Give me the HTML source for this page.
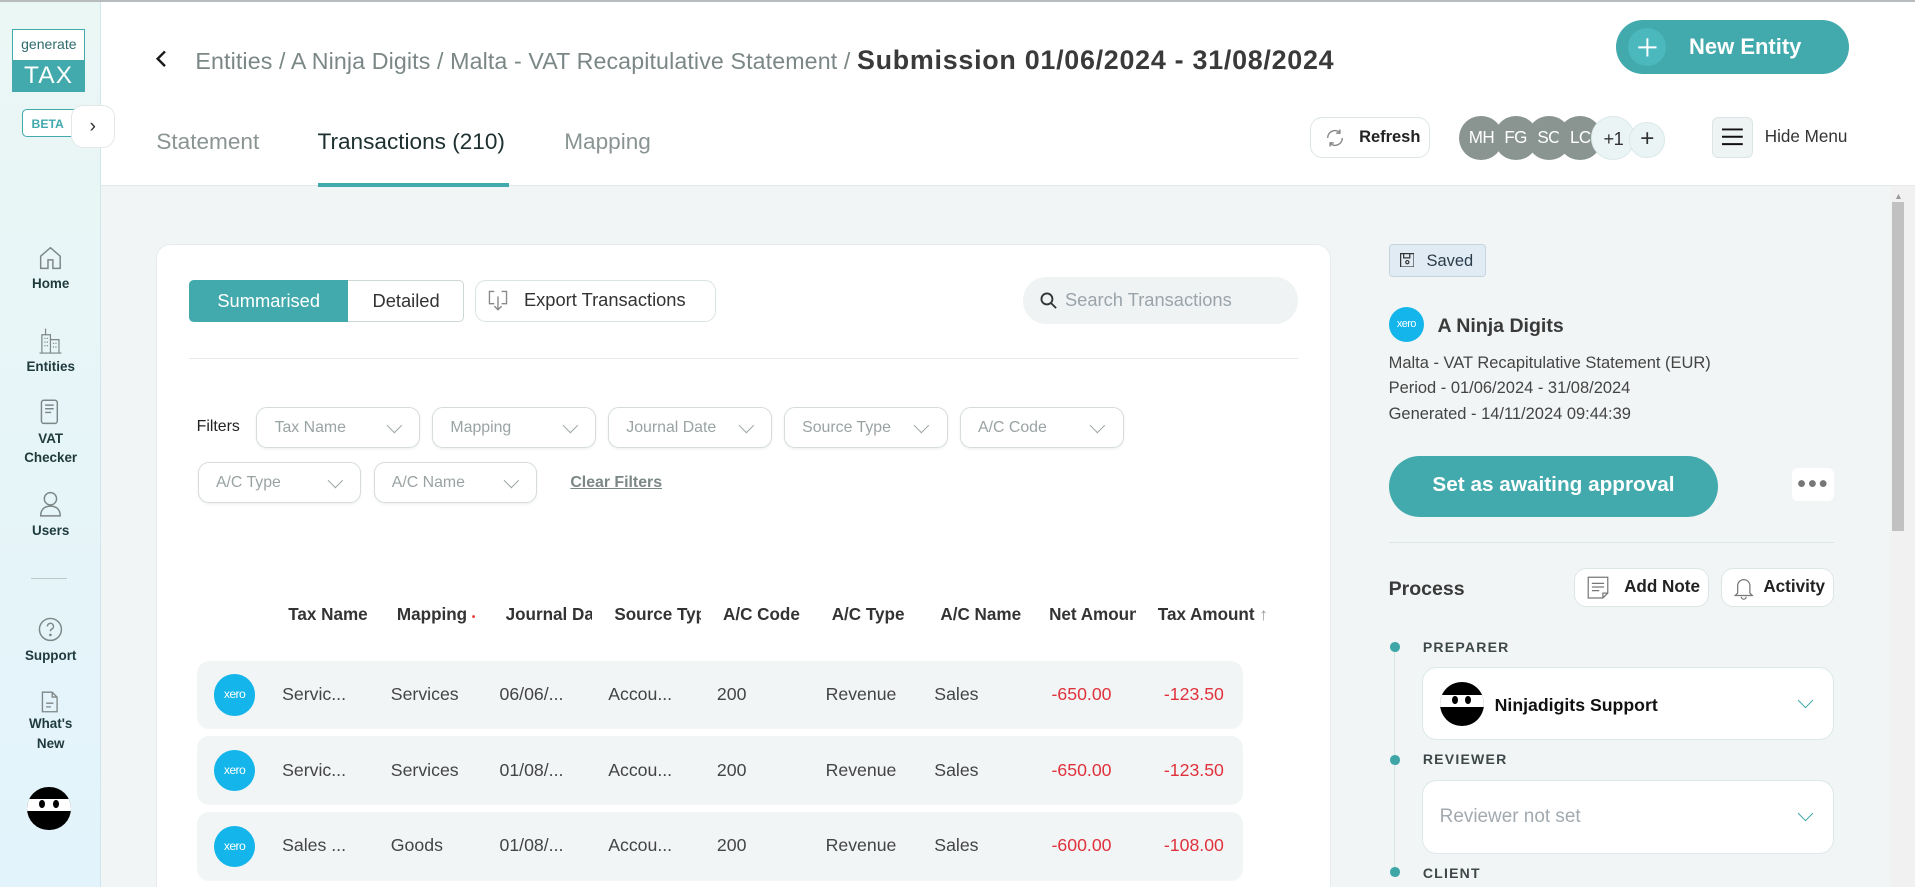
<!DOCTYPE html>
<html><head><meta charset="utf-8"><style>
*{box-sizing:border-box;margin:0;padding:0}
html,body{width:1915px;height:887px;overflow:hidden;background:#f2f5f5;font-family:"Liberation Sans",Arial,sans-serif}
#w{position:absolute;left:0;top:0;width:1568px;height:726px;zoom:1.22130;background:#f2f5f5;overflow:hidden}
.a{position:absolute}
.side{left:0;top:2px;width:83px;height:724px;background:linear-gradient(#ebf7f5,#e2f3fb);border-right:1px solid #cde7ea}
.nav{position:absolute;left:0;width:83px;text-align:center;font-size:11px;color:#1f3a3c;line-height:16px}
.hdr{left:83px;top:2px;width:1485px;height:150px;background:#fff;border-bottom:1px solid #e3e8e8}
.crumb{left:160px;top:37px;font-size:19px;color:#7b8786;white-space:nowrap;letter-spacing:.1px}
.crumb b{color:#3a3a3a;font-size:22px;font-weight:bold;letter-spacing:.6px}
.tab{top:106px;font-size:18.5px;color:#8a9493}
.card{left:128px;top:200px;width:962px;height:560px;background:#fff;border-radius:12px;border:1px solid #e6ecec}
.dd{position:absolute;height:34px;width:134px;border:1px solid #d6dcdc;border-radius:9px;background:#fff;font-size:13px;color:#9aa3a3;padding:9px 0 0 14px;box-shadow:0 1px 2px rgba(0,0,0,.06)}
.dd:after{content:"";position:absolute;right:16px;top:10px;width:8px;height:8px;border-right:1px solid #9aa3a3;border-bottom:1px solid #9aa3a3;transform:rotate(45deg)}
.th{position:absolute;top:495px;font-size:14px;font-weight:bold;color:#333;white-space:nowrap;overflow:hidden}
.row{position:absolute;left:161px;width:857px;height:56px;background:#f2f5f6;border-radius:10px;font-size:14.5px;color:#444}
.row span{position:absolute;top:19px;white-space:nowrap}
.xero{position:absolute;border-radius:50%;background:#13b5ea;color:#fff;font-size:10px;text-align:center;letter-spacing:-.5px}
.red{color:#e0323c}
.btnw{position:absolute;background:#fff;border:1px solid #dde6e6;border-radius:10px;font-size:14px;font-weight:bold;color:#222}
.av{position:absolute;top:95px;width:36px;height:36px;border-radius:50%;background:#8a9592;color:#fff;font-size:14px;text-align:center;line-height:36px;letter-spacing:-.5px}
.lbl{position:absolute;left:1165px;font-size:11.5px;letter-spacing:1px;color:#3e4848;font-weight:bold}
.dot{position:absolute;left:1138px;width:8px;height:8px;border-radius:50%;background:#3fa6a8}
.box{position:absolute;left:1164px;width:338px;height:60px;background:#fff;border:1px solid #dde8e8;border-radius:12px}
.chev{position:absolute;right:18px;top:22px;width:9px;height:9px;border-right:1.3px solid #3fa6a8;border-bottom:1.3px solid #3fa6a8;transform:rotate(45deg)}
</style></head><body><div id="w">
<div class="a" style="left:0;top:0;width:1568px;height:2px;background:#b9bcbf"></div>
<div class="a hdr"></div>
<div class="a side"></div>
<div class="a" style="left:10px;top:24px;width:60px;height:51px;border:1px solid #42aaad;background:#fff">
 <div style="font-size:11.5px;color:#2d6b6d;text-align:center;margin-top:5px">generate</div>
 <div style="position:absolute;left:0;top:24px;width:58px;height:26px;background:#42aaad;color:#fff;font-size:20px;text-align:center;line-height:26px;letter-spacing:1px">TAX</div>
</div>
<div class="a" style="left:18px;top:89px;width:46px;height:23px;border:1.5px solid #42aaad;border-radius:4px;background:#fff;font-size:10px;font-weight:bold;color:#42aaad;padding:6px 0 0 7px">BETA</div>
<div class="a" style="left:58px;top:86px;width:36px;height:35px;border-radius:10px;background:#fff;border:1px solid #e2e8e8;font-size:16px;color:#333;text-align:center;line-height:33px">&#8250;</div>
<svg class="a" style="left:30px;top:200px" width="22" height="22" viewBox="0 0 22 22" fill="none" stroke="#7d8787" stroke-width="1.2"><path d="M3 10L11 3L19 10V20H13V13H9V20H3Z"/></svg>
<div class="nav" style="top:224px;font-weight:bold">Home</div>
<svg class="a" style="left:30px;top:266px" width="22" height="24" viewBox="0 0 22 24" fill="none" stroke="#7d8787" stroke-width="1"><path d="M4 23V8H11V23M7 8V3M11 12H18V23M2 23H20"/><path d="M6 11h1M8 11h1M6 14h1M8 14h1M6 17h1M8 17h1M13 15h1M15 15h1M13 18h1M15 18h1"/></svg>
<div class="nav" style="top:292px;font-weight:bold">Entities</div>
<svg class="a" style="left:32px;top:327px" width="18" height="22" viewBox="0 0 18 22" fill="none" stroke="#7d8787" stroke-width="1.2"><rect x="2" y="1" width="13" height="19" rx="2"/><path d="M5 5h7M5 8h7M5 11h5"/></svg>
<div class="nav" style="top:351px;font-weight:bold">VAT<br>Checker</div>
<svg class="a" style="left:30px;top:400px" width="22" height="24" viewBox="0 0 22 24" fill="none" stroke="#7d8787" stroke-width="1.2"><circle cx="11" cy="8" r="5"/><path d="M3 22C3 16 7 14 11 14C15 14 19 16 19 22Z"/></svg>
<div class="nav" style="top:427px;font-weight:bold">Users</div>
<div class="a" style="left:25px;top:473px;width:30px;height:1px;background:#b9cccc"></div>
<svg class="a" style="left:30px;top:504px" width="22" height="22" viewBox="0 0 22 22" fill="none" stroke="#7d8787" stroke-width="1.2"><circle cx="11" cy="11" r="9"/><path d="M8.5 8.5a2.5 2.5 0 1 1 3.5 2.3c-.7.4-1 .9-1 1.7"/><circle cx="11" cy="15.5" r=".5" fill="#7d8787"/></svg>
<div class="nav" style="top:529px;font-weight:bold">Support</div>
<svg class="a" style="left:33px;top:566px" width="16" height="18" viewBox="0 0 16 18" fill="none" stroke="#7d8787" stroke-width="1.1"><path d="M2 1H10L14 5V17H2Z M10 1V5H14 M5 10h6M5 13h4"/></svg>
<div class="nav" style="top:585px;font-weight:bold">What's<br>New</div>
<div class="a" style="left:22px;top:644px;width:36px;height:36px;border-radius:50%;background:#000;overflow:hidden"><div style="position:absolute;top:10px;left:0;width:36px;height:10px;background:#fff"></div><div style="position:absolute;top:11px;left:10px;width:5px;height:7px;border-radius:50%;background:#000"></div><div style="position:absolute;top:11px;left:21px;width:5px;height:7px;border-radius:50%;background:#000"></div></div>
<svg class="a" style="left:126px;top:40px" width="12" height="16" viewBox="0 0 12 16"><path d="M9 2L3 8L9 14" stroke="#1a1a1a" stroke-width="2" fill="none"/></svg>
<div class="a crumb">Entities / A Ninja Digits / Malta - VAT Recapitulative Statement / <b>Submission 01/06/2024 - 31/08/2024</b></div>
<div class="a" style="left:1323px;top:16px;width:191px;height:45px;border-radius:23px;background:#42aaad"></div>
<div class="a" style="left:1333px;top:23px;width:31px;height:31px;border-radius:50%;background:#4bb8bd"></div>
<svg class="a" style="left:1340px;top:30px" width="17" height="17"><path d="M8.5 1V16M1 8.5H16" stroke="#fff" stroke-width="1.6"/></svg>
<div class="a" style="left:1383px;top:28px;font-size:18px;font-weight:bold;color:#fff">New Entity</div>
<div class="a tab" style="left:128px">Statement</div>
<div class="a tab" style="left:260px;color:#1e2f2f">Transactions (210)</div>
<div class="a tab" style="left:462px">Mapping</div>
<div class="a" style="left:260px;top:150px;width:157px;height:3px;background:#42aaad"></div>
<div class="btnw" style="left:1073px;top:96px;width:98px;height:33px;border-radius:10px"><svg style="position:absolute;left:10px;top:7px" width="18" height="18" viewBox="0 0 18 18" fill="none" stroke="#888" stroke-width="1.2"><path d="M3 9a6 6 0 0 1 10-4.5M15 9a6 6 0 0 1-10 4.5M13 2v3h-3M5 16v-3h3"/></svg><span style="position:absolute;left:39px;top:8px;font-weight:bold;font-size:13.5px">Refresh</span></div>
<div class="av" style="left:1195px">MH</div>
<div class="av" style="left:1223px">FG</div>
<div class="av" style="left:1250px">SC</div>
<div class="av" style="left:1276px">LC</div>
<div class="av" style="left:1303px;background:#eaf4f4;color:#333;border:1px solid #d9e9e9;font-size:15px">+1</div>
<div class="av" style="left:1334px;top:100px;width:29px;height:29px;line-height:27px;background:#eaf4f4;color:#333;border:1px solid #d9e9e9;font-size:20px">+</div>
<div class="a" style="left:1402px;top:96px;width:33px;height:33px;border-radius:5px;background:#eef3f3;border:1px solid #dbe5e5"></div>
<svg class="a" style="left:1410px;top:104px" width="17" height="16"><path d="M0 2H17M0 8H17M0 14H17" stroke="#111" stroke-width="1.6"/></svg>
<div class="a" style="left:1445px;top:104px;font-size:14px;color:#333">Hide Menu</div>
<div class="a" style="left:1548px;top:152px;width:20px;height:574px;background:#f1f1f1"></div>
<div class="a" style="left:1549px;top:165px;width:10px;height:270px;background:#c1c1c1"></div>
<div class="a" style="left:1551px;top:156px;font-size:7px;color:#999">&#9650;</div>
<div class="a card"></div>
<div class="a" style="left:155px;top:229px;width:225px;height:35px;border:1px solid #cfd6d6;border-radius:4px;background:#fff"></div>
<div class="a" style="left:155px;top:229px;width:130px;height:35px;border-radius:4px 0 0 4px;background:#42aaad;color:#fff;font-size:15px;text-align:center;line-height:34px">Summarised</div>
<div class="a" style="left:285px;top:229px;width:95px;height:35px;color:#333;font-size:15px;text-align:center;line-height:34px">Detailed</div>
<div class="a" style="left:389px;top:229px;width:197px;height:35px;border:1px solid #dbe3e3;border-radius:9px;background:#fff"></div>
<svg class="a" style="left:399px;top:237px" width="18" height="20" viewBox="0 0 18 20" fill="none" stroke="#888" stroke-width="1.1"><path d="M6 2H2V12H6M12 2H16V12H12M9 6V17M6 14L9 17L12 14"/></svg>
<div class="a" style="left:429px;top:237px;font-size:15px;color:#333">Export Transactions</div>
<div class="a" style="left:838px;top:227px;width:225px;height:38px;border-radius:19px;background:#f0f3f4"></div>
<svg class="a" style="left:851px;top:238px" width="16" height="16" fill="none" stroke="#333" stroke-width="1.5"><circle cx="6.5" cy="6.5" r="4.5"/><path d="M10 10L14 14"/></svg>
<div class="a" style="left:872px;top:237px;font-size:15px;color:#9aa4ab">Search Transactions</div>
<div class="a" style="left:155px;top:293px;width:908px;height:1px;background:#e6eaea"></div>
<div class="a" style="left:161px;top:342px;font-size:13px;color:#222">Filters</div>
<div class="dd" style="left:210px;top:333px">Tax Name</div>
<div class="dd" style="left:354px;top:333px">Mapping</div>
<div class="dd" style="left:498px;top:333px">Journal Date</div>
<div class="dd" style="left:642px;top:333px">Source Type</div>
<div class="dd" style="left:786px;top:333px">A/C Code</div>
<div class="dd" style="left:162px;top:378px">A/C Type</div>
<div class="dd" style="left:306px;top:378px">A/C Name</div>
<div class="a" style="left:467px;top:388px;font-size:13px;color:#7b8786;font-weight:bold;text-decoration:underline">Clear Filters</div>
<div class="th" style="left:236px;width:80px">Tax Name</div>
<div class="th" style="left:325px;width:70px">Mapping <span style="color:#e33;font-size:8px">&#8226;</span></div>
<div class="th" style="left:414px;width:71px">Journal Date</div>
<div class="th" style="left:503px;width:71px">Source Type</div>
<div class="th" style="left:592px;width:80px">A/C Code</div>
<div class="th" style="left:681px;width:80px">A/C Type</div>
<div class="th" style="left:770px;width:80px">A/C Name</div>
<div class="th" style="left:859px;width:71px">Net Amount</div>
<div class="th" style="left:948px;width:110px">Tax Amount <span style="color:#999;font-weight:normal">&#8593;</span></div>
<div class="row" style="top:541px"><div class="xero" style="left:14px;top:11px;width:34px;height:34px;line-height:34px">xero</div><span style="left:70px">Servic...</span><span style="left:159px">Services</span><span style="left:248px">06/06/...</span><span style="left:337px">Accou...</span><span style="left:426px">200</span><span style="left:515px">Revenue</span><span style="left:604px">Sales</span><span class="red" style="left:700px">-650.00</span><span class="red" style="left:792px">-123.50</span></div>
<div class="row" style="top:603px"><div class="xero" style="left:14px;top:11px;width:34px;height:34px;line-height:34px">xero</div><span style="left:70px">Servic...</span><span style="left:159px">Services</span><span style="left:248px">01/08/...</span><span style="left:337px">Accou...</span><span style="left:426px">200</span><span style="left:515px">Revenue</span><span style="left:604px">Sales</span><span class="red" style="left:700px">-650.00</span><span class="red" style="left:792px">-123.50</span></div>
<div class="row" style="top:665px"><div class="xero" style="left:14px;top:11px;width:34px;height:34px;line-height:34px">xero</div><span style="left:70px">Sales ...</span><span style="left:159px">Goods</span><span style="left:248px">01/08/...</span><span style="left:337px">Accou...</span><span style="left:426px">200</span><span style="left:515px">Revenue</span><span style="left:604px">Sales</span><span class="red" style="left:700px">-600.00</span><span class="red" style="left:792px">-108.00</span></div>
<div class="a" style="left:1137px;top:200px;width:80px;height:27px;background:#e1ebf3;border:1px solid #c4d4df;border-radius:3px"></div>
<svg class="a" style="left:1146px;top:207px" width="12" height="12" fill="none" stroke="#333" stroke-width="1"><rect x=".5" y=".5" width="11" height="11"/><path d="M3 .5V4H8V.5"/><circle cx="6" cy="7.5" r="1.3"/></svg>
<div class="a" style="left:1168px;top:206px;font-size:13.5px;color:#2a3b4a">Saved</div>
<div class="xero" style="left:1137px;top:251px;width:29px;height:29px;line-height:29px;font-size:9px">xero</div>
<div class="a" style="left:1177px;top:258px;font-size:16px;font-weight:bold;color:#3a3a3a">A Ninja Digits</div>
<div class="a" style="left:1137px;top:287px;font-size:13.5px;color:#444;line-height:21px">Malta - VAT Recapitulative Statement (EUR)<br>Period - 01/06/2024 - 31/08/2024<br>Generated - 14/11/2024 09:44:39</div>
<div class="a" style="left:1137px;top:373px;width:270px;height:50px;border-radius:25px;background:#42aaad;color:#fff;font-size:17px;font-weight:bold;text-align:center;line-height:48px">Set as awaiting approval</div>
<div class="a" style="left:1467px;top:383px;width:35px;height:27px;background:#fff;border-radius:5px;color:#777;font-size:13px;text-align:center;line-height:27px;letter-spacing:1px">&#9679;&#9679;&#9679;</div>
<div class="a" style="left:1137px;top:444px;width:365px;height:1px;background:#dde6e6"></div>
<div class="a" style="left:1137px;top:473px;font-size:16px;font-weight:bold;color:#3a3a3a">Process</div>
<div class="btnw" style="left:1289px;top:465px;width:110px;height:32px"><svg style="position:absolute;left:10px;top:6px" width="18" height="20" fill="none" stroke="#777" stroke-width="1"><path d="M1 1H17V14L13 18H1Z M13 18V14H17 M4 6h10M4 9h10M4 12h6"/></svg><span style="position:absolute;left:40px;top:7px">Add Note</span></div>
<div class="btnw" style="left:1409px;top:465px;width:93px;height:32px"><svg style="position:absolute;left:10px;top:6px" width="16" height="20" fill="none" stroke="#777" stroke-width="1"><path d="M3 14V8a5 5 0 0 1 10 0V14L15 16H1Z M6 17a2 2 0 0 0 4 0"/></svg><span style="position:absolute;left:34px;top:7px">Activity</span></div>
<div class="a" style="left:1141px;top:534px;width:1px;height:180px;background:#d4e3e3"></div>
<div class="dot" style="top:526px"></div><div class="lbl" style="top:523px">PREPARER</div>
<div class="box" style="top:546px"><div style="position:absolute;left:14px;top:12px;width:36px;height:36px;border-radius:50%;background:#000;overflow:hidden"><div style="position:absolute;top:10px;left:0;width:36px;height:10px;background:#fff"></div><div style="position:absolute;top:11px;left:10px;width:5px;height:7px;border-radius:50%;background:#000"></div><div style="position:absolute;top:11px;left:21px;width:5px;height:7px;border-radius:50%;background:#000"></div></div><span style="position:absolute;left:59px;top:22px;font-size:14.5px;font-weight:bold;color:#111">Ninjadigits Support</span><div class="chev"></div></div>
<div class="dot" style="top:618px"></div><div class="lbl" style="top:615px">REVIEWER</div>
<div class="box" style="top:639px"><span style="position:absolute;left:14px;top:20px;font-size:15.5px;color:#a3aaaf">Reviewer not set</span><div class="chev"></div></div>
<div class="dot" style="top:710px"></div><div class="lbl" style="top:708px">CLIENT</div>
</div></body></html>
